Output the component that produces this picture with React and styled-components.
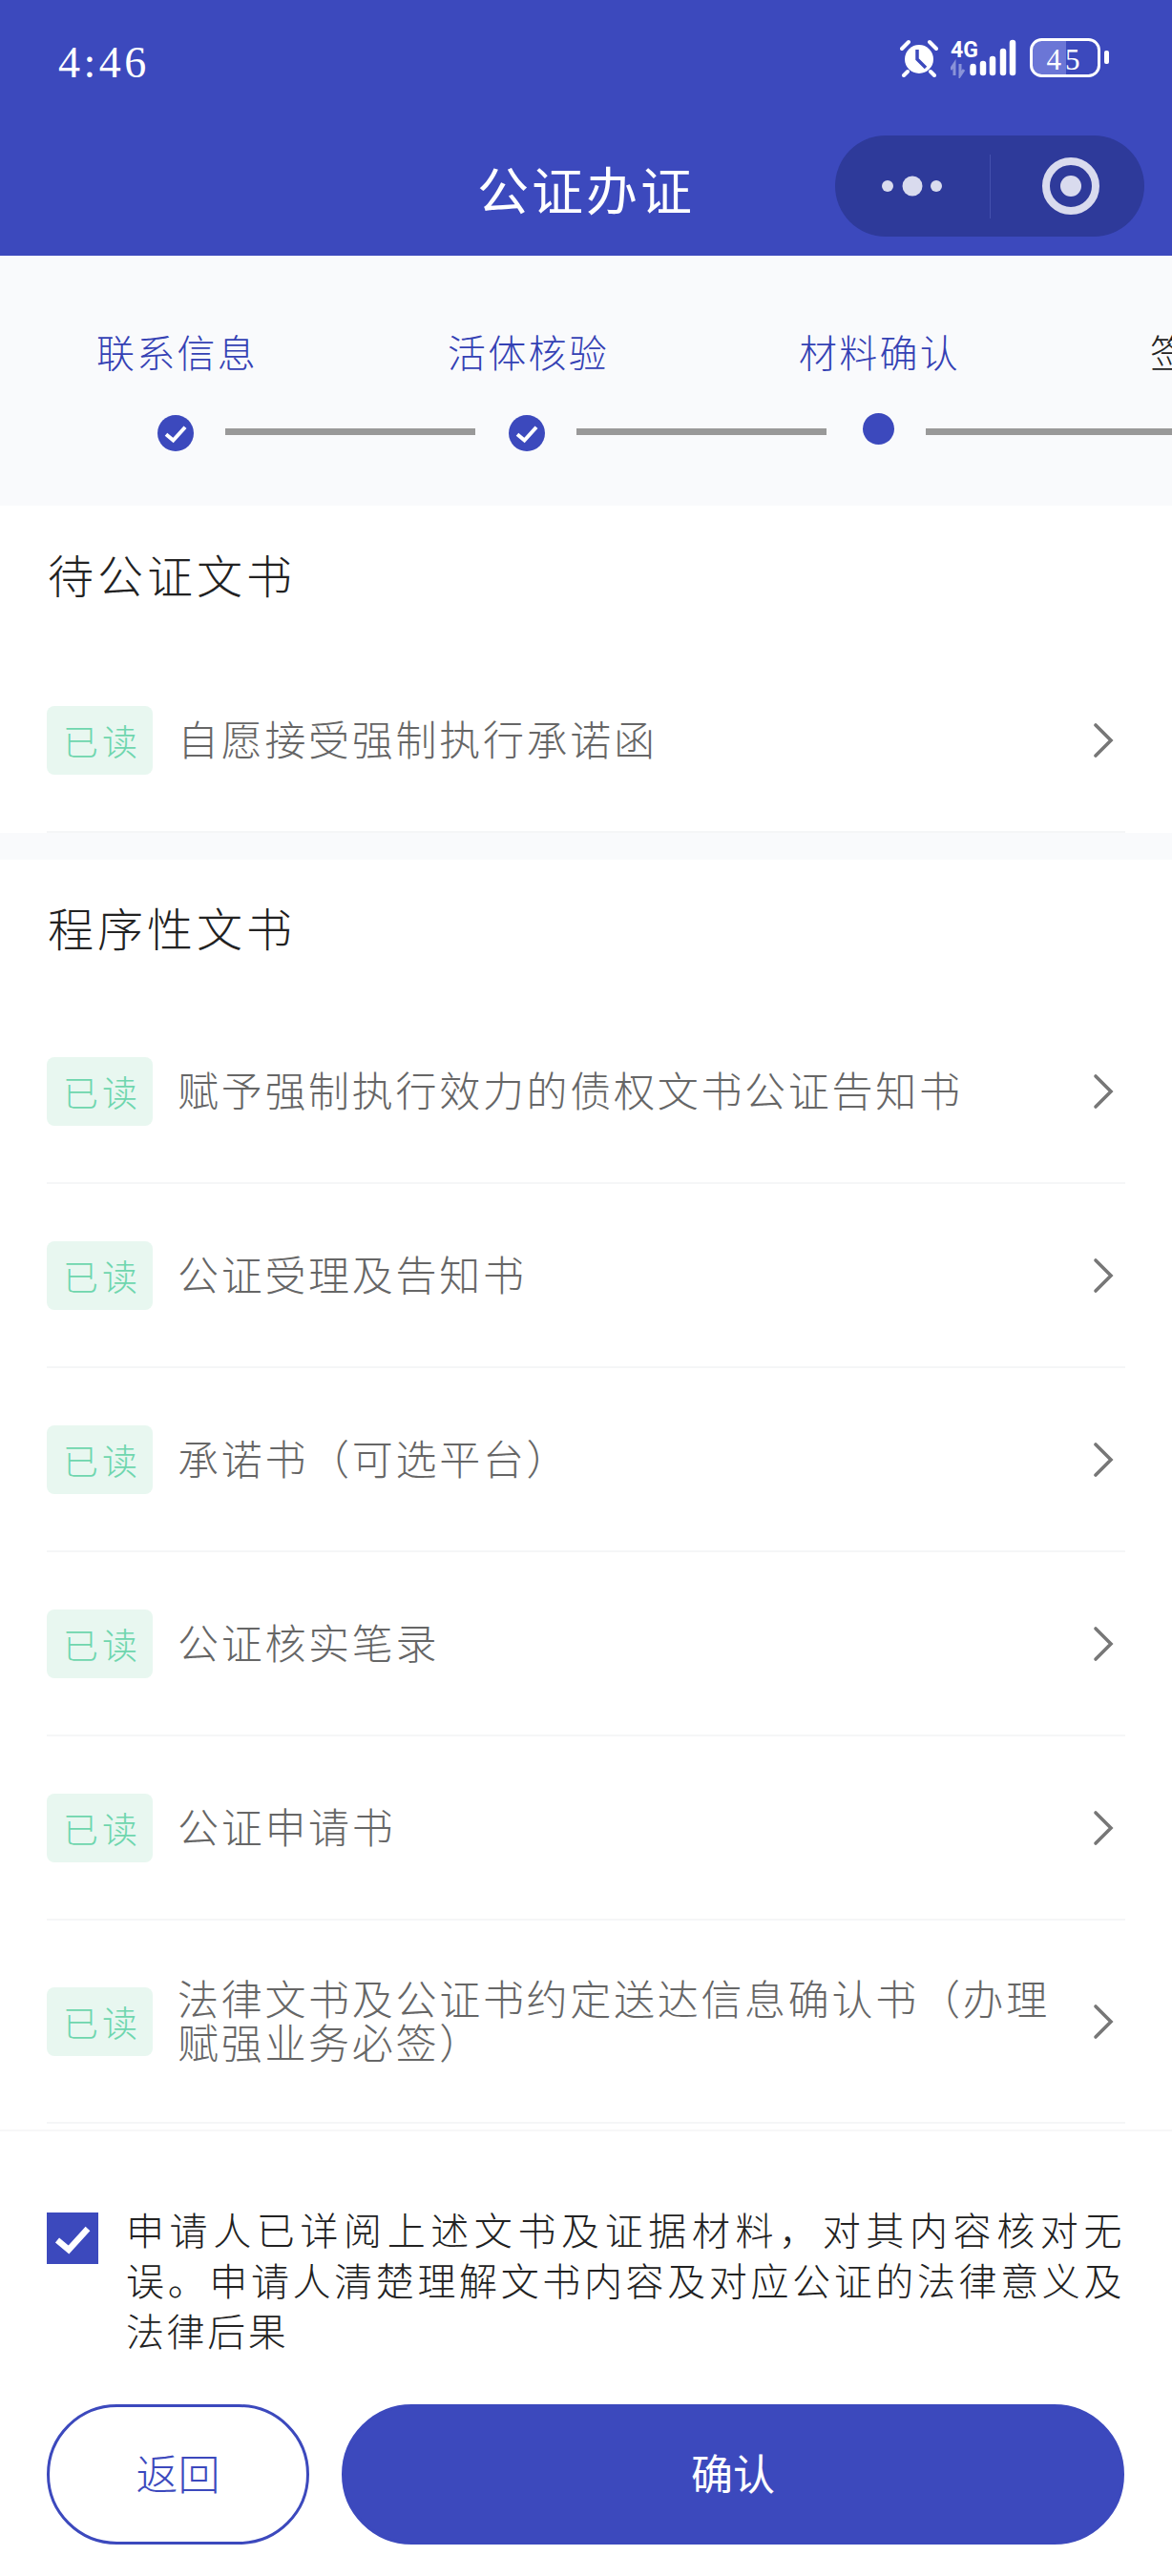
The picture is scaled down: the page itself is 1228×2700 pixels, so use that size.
import React from "react";
import styled, { createGlobalStyle } from "styled-components";

const BLUE = "#3c49bd";

const GlobalStyle = createGlobalStyle`
  html, body {
    margin: 0;
    padding: 0;
    background: #fff;
  }
  body {
    font-family: "Noto Sans CJK SC", "Noto Sans", sans-serif;
    font-weight: 300;
  }
  * {
    box-sizing: border-box;
  }
`;

const Page = styled.div`
  width: 1228px;
  height: 2700px;
  overflow: hidden;
  background: #fff;
  display: flex;
  flex-direction: column;
`;

const Header = styled.header`
  height: 268px;
  flex-shrink: 0;
  background: ${BLUE};
  color: #fff;
  padding: 42px 29px 20px 61px;
  display: flex;
  flex-direction: column;
`;

const StatusBar = styled.div`
  height: 42px;
  display: flex;
  justify-content: space-between;
  align-items: center;
`;

const Time = styled.span`
  font-family: "Liberation Serif", serif;
  font-size: 46px;
  letter-spacing: 3.5px;
  line-height: 42px;
  padding-top: 6px;
`;

const StatusIcons = styled.div`
  height: 42px;
  margin-top: -4px;
  margin-right: 36px;
  display: flex;
  align-items: center;
  gap: 13px;
`;

const NavBar = styled.div`
  margin-top: 58px;
  margin-left: -61px;
  height: 106px;
  display: flex;
  justify-content: flex-end;
  position: relative;
`;

const Title = styled.h1`
  position: absolute;
  left: 0;
  right: -29px;
  top: 11px;
  margin: 0;
  text-align: center;
  font-size: 54px;
  font-weight: 400;
  letter-spacing: 3px;
  line-height: 90px;
`;

const Capsule = styled.div`
  width: 324px;
  height: 106px;
  border-radius: 53px;
  background: #2e3a9a;
  display: flex;
  align-items: center;
`;

const CapsuleSide = styled.div`
  flex: 0 0 162px;
  height: 67px;
  display: flex;
  align-items: center;
  justify-content: center;
  border-left: ${(p) => (p.divided ? "1px solid #4450ad" : "none")};
  padding-left: ${(p) => (p.divided ? "6px" : "2px")};
`;

const Steps = styled.div`
  height: 262px;
  flex-shrink: 0;
  background: #f9fafc;
  display: flex;
  overflow: hidden;
  padding-top: 71px;
`;

const Step = styled.div`
  width: 368px;
  flex-shrink: 0;
  display: flex;
  flex-direction: column;
  position: relative;
`;

const StepLabel = styled.div`
  width: 368px;
  padding-left: 3px;
  text-align: center;
  font-size: 40px;
  line-height: 58px;
  letter-spacing: 2.2px;
  color: ${(p) => (p.active ? "#3441b4" : "#222")};
`;

const StepMark = styled.div`
  height: 40px;
  margin-top: 37px;
  padding-left: ${(p) => (p.current ? "168px" : "165px")};
  display: flex;
  align-items: ${(p) => (p.current ? "flex-start" : "center")};
`;

const DoneDot = styled.div`
  width: 38px;
  height: 38px;
  border-radius: 50%;
  background: ${BLUE};
  display: flex;
  align-items: center;
  justify-content: center;
`;

const CurrentDot = styled.div`
  width: 33px;
  height: 33px;
  margin-top: -1px;
  border-radius: 50%;
  background: ${BLUE};
`;

const StepLine = styled.div`
  position: absolute;
  left: ${(p) => (p.current ? "234px" : "236px")};
  width: 262px;
  top: 110px;
  height: 7px;
  background: #999;
`;

const Section = styled.section`
  background: #fff;
  padding: 0 49px;
`;

const SectionTitle = styled.h2`
  margin: 0;
  height: ${(p) => p.height}px;
  font-size: 48px;
  font-weight: inherit;
  letter-spacing: 4px;
  line-height: 70px;
  color: #222;
  padding: ${(p) => p.top}px 0 0 1px;
`;

const Row = styled.div`
  height: ${(p) => (p.tall ? "213px" : "193px")};
  display: flex;
  align-items: center;
  border-bottom: 2px solid #f5f6f7;
`;

const Badge = styled.span`
  width: 111px;
  height: 72px;
  flex-shrink: 0;
  padding-left: 5px;
  border-radius: 8px;
  background: #e8f7f0;
  color: #6fd6ae;
  font-size: 37px;
  letter-spacing: 4px;
  display: flex;
  align-items: center;
  justify-content: center;
`;

const RowText = styled.span`
  flex: 1;
  margin-left: 26px;
  padding-bottom: 6px;
  font-size: 43px;
  letter-spacing: 2.7px;
  line-height: 46px;
  color: #666;
`;

const Chevron = styled.svg`
  width: 26px;
  height: 40px;
  margin-left: 18px;
  margin-right: 10px;
  flex-shrink: 0;
`;

const Gap = styled.div`
  height: 28px;
  flex-shrink: 0;
  background: #f9fafc;
`;

const Footer = styled.footer`
  margin-top: 6px;
  border-top: 2px solid #f7f7f8;
  padding: 76px 50px 0 49px;
`;

const Agreement = styled.div`
  display: flex;
  align-items: flex-start;
`;

const CheckBox = styled.div`
  width: 54px;
  height: 54px;
  flex-shrink: 0;
  background: ${BLUE};
  display: flex;
  align-items: center;
  justify-content: center;
  margin-top: 9px;
`;

const AgreementText = styled.p`
  margin: 0 0 0 29px;
  flex: 1;
  font-size: 40px;
  line-height: 53px;
  letter-spacing: 2.6px;
  color: #222;
  text-align: justify;
`;

const Buttons = styled.div`
  margin-top: 51px;
  display: flex;
  gap: 34px;
`;

const Button = styled.button`
  height: 147px;
  border-radius: 74px;
  width: ${(p) => (p.primary ? "820px" : "275px")};
  border: 3px solid ${BLUE};
  background: ${(p) => (p.primary ? BLUE : "#fff")};
  color: ${(p) => (p.primary ? "#fff" : BLUE)};
  font-family: inherit;
  font-weight: ${(p) => (p.primary ? 400 : 300)};
  font-size: 44px;
  padding: 0 0 6px;
`;

const AlarmIcon = () => (
  <svg width="40" height="40" viewBox="0 0 40 40">
    <circle cx="20" cy="21" r="15" fill="#fff" />
    <path d="M2 10 L9 3 M31 3 L38 10" stroke="#fff" strokeWidth="4" strokeLinecap="round" />
    <path d="M8 34 L4 38 M32 34 L36 38" stroke="#fff" strokeWidth="4" strokeLinecap="round" />
    <path d="M18 11 V21 L27 30" stroke={BLUE} strokeWidth="3.5" fill="none" />
  </svg>
);

const SignalIcon = () => (
  <svg width="70" height="42" viewBox="0 0 70 42">
    <text x="0" y="20" fontFamily="Roboto, sans-serif" fontSize="23" fontWeight="700" fill="#fff">4G</text>
    <path d="M4 39 V27 L0 33 M10 27 V39 L14 33" stroke="#8a93d8" strokeWidth="3" fill="none" />
    <g stroke="#fff" strokeWidth="6.5" strokeLinecap="round">
      <path d="M23.5 30 V36" />
      <path d="M34 27 V36" />
      <path d="M44 22 V36" />
      <path d="M55 14 V36" />
      <path d="M65 5 V36" />
    </g>
  </svg>
);

const BatteryIcon = () => (
  <svg width="84" height="42" viewBox="0 0 84 42">
    <path d="M12 2 H38 V40 H12 Q2 40 2 30 V12 Q2 2 12 2 Z" fill="#6b76d6" />
    <rect x="1.5" y="1.5" width="71" height="38" rx="11" fill="none" stroke="#fff" strokeWidth="3" />
    <rect x="78" y="13" width="5" height="14" rx="2" fill="#fff" />
    <text x="37" y="33" textAnchor="middle" fontFamily="Liberation Serif, serif" fontSize="31" letterSpacing="4" fill="#fff">45</text>
  </svg>
);

const docsFirst = ["自愿接受强制执行承诺函"];

const docsSecond = [
  "赋予强制执行效力的债权文书公证告知书",
  "公证受理及告知书",
  "承诺书（可选平台）",
  "公证核实笔录",
  "公证申请书",
];

const DocRow = ({ text, tall }) => (
  <Row tall={tall}>
    <Badge>已读</Badge>
    <RowText>{text}</RowText>
    <Chevron viewBox="0 0 26 40">
      <path d="M5 4 L21 20 L5 36" fill="none" stroke="#777" strokeWidth="3.6" strokeLinecap="round" />
    </Chevron>
  </Row>
);

const Check = ({ size }) => (
  <svg width={size} height={size} viewBox="0 0 24 24">
    <path d="M4 13 L10 18 L20 7" fill="none" stroke="#fff" strokeWidth="3.2" />
  </svg>
);

const App = () => {
  return (
    <Page>
      <GlobalStyle />
      <Header>
        <StatusBar>
          <Time>4:46</Time>
          <StatusIcons>
            <AlarmIcon />
            <SignalIcon />
            <BatteryIcon />
          </StatusIcons>
        </StatusBar>
        <NavBar>
          <Title>公证办证</Title>
          <Capsule>
            <CapsuleSide>
              <svg width="70" height="24" viewBox="0 0 70 24">
                <circle cx="8" cy="12" r="6" fill="#d9dbee" />
                <circle cx="34" cy="12" r="10.5" fill="#d9dbee" />
                <circle cx="59" cy="12" r="6" fill="#d9dbee" />
              </svg>
            </CapsuleSide>
            <CapsuleSide divided>
              <svg width="62" height="62" viewBox="0 0 62 62">
                <circle cx="31" cy="31" r="26" fill="none" stroke="#d9dbee" strokeWidth="8" />
                <circle cx="31" cy="31" r="11" fill="#d9dbee" />
              </svg>
            </CapsuleSide>
          </Capsule>
        </NavBar>
      </Header>

      <Steps>
        <Step>
          <StepLabel active>联系信息</StepLabel>
          <StepMark>
            <DoneDot>
              <Check size={30} />
            </DoneDot>
          </StepMark>
          <StepLine />
        </Step>
        <Step>
          <StepLabel active>活体核验</StepLabel>
          <StepMark>
            <DoneDot>
              <Check size={30} />
            </DoneDot>
          </StepMark>
          <StepLine />
        </Step>
        <Step>
          <StepLabel active>材料确认</StepLabel>
          <StepMark current>
            <CurrentDot />
          </StepMark>
          <StepLine current />
        </Step>
        <Step>
          <StepLabel>签署确认</StepLabel>
        </Step>
      </Steps>

      <Section>
        <SectionTitle top={36} height={150}>待公证文书</SectionTitle>
        {docsFirst.map((text) => (
          <DocRow key={text} text={text} />
        ))}
      </Section>
      <Gap />
      <Section>
        <SectionTitle top={35} height={147}>程序性文书</SectionTitle>
        {docsSecond.map((text) => (
          <DocRow key={text} text={text} />
        ))}
        <DocRow tall text="法律文书及公证书约定送达信息确认书（办理赋强业务必签）" />
      </Section>

      <Footer>
        <Agreement>
          <CheckBox>
            <Check size={48} />
          </CheckBox>
          <AgreementText>
            申请人已详阅上述文书及证据材料，对其内容核对无误。申请人清楚理解文书内容及对应公证的法律意义及法律后果
          </AgreementText>
        </Agreement>
        <Buttons>
          <Button>返回</Button>
          <Button primary>确认</Button>
        </Buttons>
      </Footer>
    </Page>
  );
};

export default App;
